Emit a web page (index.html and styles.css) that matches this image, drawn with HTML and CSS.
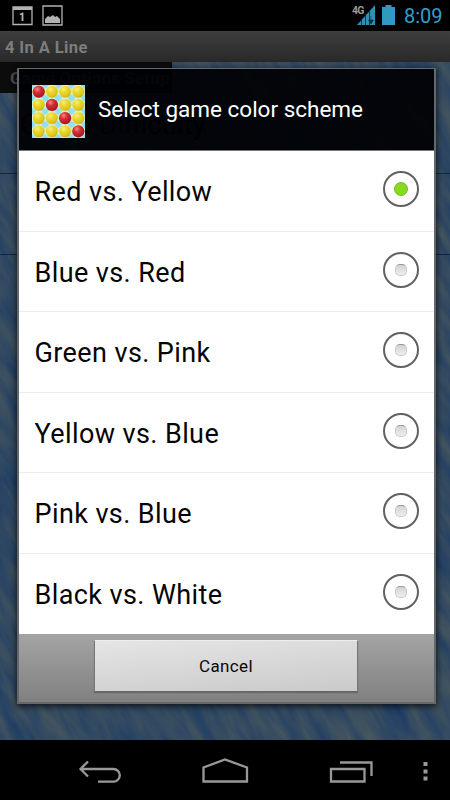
FILE: index.html
```html
<!DOCTYPE html>
<html lang="en">
<head>
<meta charset="utf-8">
<title>4 In A Line</title>
<link rel="stylesheet" href="styles.css">
</head>
<body>
<header class="status">
  <svg class="status-left" width="70" height="31" viewBox="0 0 70 31">
    <path d="M13 7h19v17.500H13z" fill="none" stroke="#b2b2b2" stroke-width="1.300"/>
    <path d="M13 7h19v3H13z" fill="#b2b2b2"/>
    <path d="M20 14.500l2.500-1v7.500" fill="none" stroke="#b2b2b2" stroke-width="1.800"/>
    <path d="M43 6h19v19H43z" fill="none" stroke="#b2b2b2" stroke-width="1.300"/>
    <path d="M45 23v-4l3-3 2 1 3-2 2 2 2-1 3 3v4z" fill="#b2b2b2"/>
  </svg>
  <svg class="status-right" width="50" height="31" viewBox="0 0 50 31">
    <path d="M7 25L25 5v20z" fill="#328fb2"/>
    <path d="M11.500 18v7M15.500 14v11M19.500 10v15" stroke="#09202b" stroke-width=".8"/>
    <path d="M21 16v7M18.500 20l2.500 4 2.500-4z" stroke="#082936" stroke-width=".5" fill="#082936"/>
    <path d="M32 7h3.500V5h6v2H45v18H32z" fill="#3199c1"/>
  </svg>
  <span class="network">4G</span>
  <span class="clock">8:09</span>
</header>
<div class="titlebar">4 In A Line</div>
<main class="content">
  <svg class="water" width="450" height="678">
    <defs>
      <filter id="waves" x="0" y="0" width="100%" height="100%" color-interpolation-filters="sRGB">
        <feTurbulence type="fractalNoise" baseFrequency=".08 .018" numOctaves="3" seed="8"/>
        <feColorMatrix values=".22 0 0 0 .09  .14 0 0 0 .22  -.04 0 0 0 .4  0 0 0 0 1"/>
      </filter>
    </defs>
    <rect x="-400" y="-300" width="1250" height="1300" filter="url(#waves)" transform="rotate(-30 225 339)"/>
  </svg>
  <div class="options">
    <div class="section">Game Options Setup</div>
    <div class="option">Game Difficulty</div>
    <div class="option"></div>
  </div>
</main>
<nav class="navbar">
  <svg width="450" height="60" viewBox="0 0 450 60" fill="none" stroke="#999" stroke-width="2.300">
    <path d="M88 21.500l-7.500 7.500 7.500 7.500M81 29h32.500a6.300 6.300 0 0 1 0 12.600H98"/>
    <path d="M203.500 41.500V27.500L225 19.500l22 8v14z"/>
    <path d="M331 29h33.500v12.500H331zM340 22.500h31.500V36"/>
    <path d="M425.500 22v4M425.500 29.500v4M425.500 36.500v4" stroke-width="4"/>
  </svg>
</nav>
<section class="dialog">
  <div class="dialog-head">
    <svg class="logo" width="53" height="53" viewBox="0 0 53 53">
      <defs>
        <radialGradient id="yellow" cx=".38" cy=".3" r=".72"><stop stop-color="#f7ef80"/><stop offset=".4" stop-color="#ebd72b"/><stop offset=".8" stop-color="#dcc617"/><stop offset="1" stop-color="#b9a834"/></radialGradient>
        <radialGradient id="red" cx=".38" cy=".3" r=".72"><stop stop-color="#ee8984"/><stop offset=".4" stop-color="#d52f34"/><stop offset="1" stop-color="#a01423"/></radialGradient>
        <pattern id="cells" width="13.200" height="13.200" patternUnits="userSpaceOnUse">
          <rect width="13.200" height="13.200" fill="#e2f7f2"/>
          <path d="M0 0l4 0-4 4zM13.200 0v4l-4-4zM0 13.200v-4l4 4zM13.200 13.200h-4l4-4z" fill="#8fdff2"/>
          <circle cx="6.700" cy="6.700" r="6.100" fill="url(#yellow)"/>
        </pattern>
      </defs>
      <rect width="53" height="53" fill="url(#cells)"/>
      <g fill="url(#red)"><circle cx="6.700" cy="6.700" r="6.100"/><circle cx="19.900" cy="19.900" r="6.100"/><circle cx="33.100" cy="33.100" r="6.100"/><circle cx="46.300" cy="46.300" r="6.100"/></g>
    </svg>
    <h1>Select game color scheme</h1>
  </div>
  <div class="choices">
    <div class="choice"><span>Red vs. Yellow</span><i class="radio checked"></i></div>
    <div class="choice"><span>Blue vs. Red</span><i class="radio"></i></div>
    <div class="choice"><span>Green vs. Pink</span><i class="radio"></i></div>
    <div class="choice"><span>Yellow vs. Blue</span><i class="radio"></i></div>
    <div class="choice"><span>Pink vs. Blue</span><i class="radio"></i></div>
    <div class="choice"><span>Black vs. White</span><i class="radio"></i></div>
  </div>
  <div class="dialog-foot"><button>Cancel</button></div>
</section>
</body>
</html>
```
FILE: styles.css
```css
* { box-sizing: border-box; }
body {
  position: relative;
  display: flex;
  flex-direction: column;
  width: 450px;
  height: 800px;
  margin: 0;
  overflow: hidden;
  background: #000;
  font-family: Roboto, sans-serif;
}
svg { display: block; }
.status {
  position: relative;
  display: flex;
  flex: none;
  align-items: center;
  height: 31px;
  background: #000;
}
.status-right { margin-left: 280px; }
.network {
  position: absolute;
  left: 352px;
  top: 5px;
  color: #999;
  font-size: 10.5px;
  font-weight: 700;
  line-height: 12px;
  letter-spacing: -.8px;
}
.clock {
  margin-left: 4px;
  padding-top: 2px;
  color: #339fca;
  font-size: 20px;
  line-height: 31px;
}
.titlebar {
  flex: none;
  height: 31px;
  padding-left: 5px;
  background: linear-gradient(#3e3e3e, #292929);
  color: #7d7d7d;
  font-size: 16.5px;
  font-weight: 700;
  line-height: 33px;
  letter-spacing: .4px;
}
.content {
  position: relative;
  flex: none;
  height: 678px;
  overflow: hidden;
}
.water { position: absolute; inset: 0; }
.options { position: relative; }
.section {
  width: 172px;
  height: 31px;
  padding-left: 10px;
  background: #0c0c0d;
  color: #4c4c4c;
  font-size: 17px;
  font-weight: 700;
  line-height: 33px;
  letter-spacing: .15px;
  white-space: nowrap;
}
.option {
  height: 81px;
  padding-left: 20px;
  border-bottom: 1px solid #162638;
  color: #000;
  font-size: 27.500px;
  line-height: 64px;
}
.navbar { flex: none; height: 60px; }
.dialog {
  position: absolute;
  left: 17px;
  top: 68px;
  display: flex;
  flex-direction: column;
  width: 419px;
  height: 636px;
  border: 2px solid #62686c;
  border-top-width: 1px;
  box-shadow: 0 2px 6px 1px rgba(0, 0, 0, .65);
}
.dialog-head {
  display: flex;
  flex: none;
  align-items: center;
  gap: 13px;
  height: 82px;
  padding: 3px 0 0 13px;
  border-bottom: 1px solid #777;
  background: rgba(0, 1, 4, .94);
}
.dialog-head h1 {
  margin: 0;
  padding-bottom: 5px;
  color: #fff;
  font-size: 22.500px;
  font-weight: 400;
  line-height: 30px;
  white-space: nowrap;
}
.choices {
  display: grid;
  flex: none;
  grid-template-rows: repeat(6, 1fr);
  height: 483px;
  background: #fff;
}
.choice {
  display: flex;
  align-items: center;
  justify-content: space-between;
  padding: 0 15px 3px 15.500px;
  border-bottom: 1px solid #ececec;
  color: #050505;
  font-size: 27px;
  line-height: 32px;
  letter-spacing: .4px;
}
.choice:last-child { border-bottom: 0; }
.choice span { padding-top: 6px; }
.radio {
  display: grid;
  flex: none;
  place-items: center;
  width: 36px;
  height: 36px;
  border: 2px solid #606163;
  border-radius: 50%;
}
.radio::after {
  content: "";
  box-sizing: border-box;
  width: 12px;
  height: 12px;
  border: 1px solid #c9c9c9;
  border-top-color: #999;
  border-radius: 5px;
  background: linear-gradient(#d4d4d4, #eee);
}
.radio.checked::after {
  width: 14px;
  height: 14px;
  border-color: #76b52b;
  border-radius: 50%;
  background: linear-gradient(#8bd52a, #83e00b);
}
.dialog-foot {
  display: flex;
  flex: 1;
  align-items: flex-start;
  padding: 6px 0 0 75px;
  background: linear-gradient(#a4a4a4, #808080);
}
.dialog-foot button {
  width: 264px;
  height: 52px;
  padding: 0;
  border: 1px solid #777;
  border-top-color: #eee;
  border-bottom-color: #666;
  background: linear-gradient(175deg, #e5e5e5, #cacaca);
  box-shadow: 0 1px 1px rgba(0, 0, 0, .2);
  color: #080808;
  font: 17px Roboto, sans-serif;
  letter-spacing: .4px;
}
```
